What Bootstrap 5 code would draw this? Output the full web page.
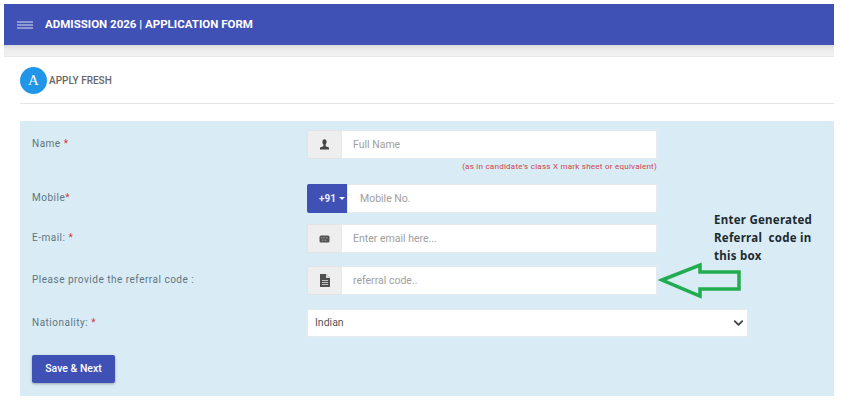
<!DOCTYPE html>
<html lang="en">
  <head>
    <meta charset="UTF-8" />
    <meta name="viewport" content="width=device-width, initial-scale=1.0" />
    <title>Application Form</title>
    <link
      href="https://cdn.jsdelivr.net/npm/bootstrap@5.3.0/dist/css/bootstrap.min.css"
      rel="stylesheet"
    />
    <style>
      body {
        font-family: Roboto, "Liberation Sans", sans-serif;
        background: #fff;
        padding: 4px 7px 0 4px;
        height: 401px;
        overflow: hidden;
      }
      .top-bar {
        height: 41px;
        background: #3f51b5;
        padding: 0 13px;
        color: #fff;
        font-size: 11.5px;
        font-weight: 700;
        gap: 12px;
      }
      .bar-shade {
        height: 12px;
        background: linear-gradient(#d9d9d9, #ececec 40%, #f1f1f1);
        border-bottom: 1px solid #e8e8e8;
      }
      .head-row {
        margin: 0 0 0 16px;
        height: 47px;
        border-bottom: 1px solid #e6e6e6;
        font-size: 10px;
        font-weight: 500;
        color: #666;
        gap: 2px;
      }
      .avatar-a {
        width: 27px;
        height: 27px;
        border-radius: 50%;
        background: #2196e8;
        color: #fff;
        font-family: "Liberation Serif", serif;
        font-size: 15px;
      }
      .form-panel {
        margin: 17px 0 0 16px;
        height: 275px;
        background: #d9ecf6;
        padding: 9px 12px 0;
      }
      .form-line {
        font-size: 10px;
        letter-spacing: 0.5px;
        color: #5f7480;
      }
      .form-line label {
        width: 275px;
        flex: none;
        padding-top: 6px;
      }
      .req {
        color: #d9343f;
      }
      .field-box {
        width: 350px;
        height: 29px;
        flex-wrap: nowrap;
        letter-spacing: 0;
      }
      .field-box .input-group-text {
        width: 35px;
        background: #eeeeee;
        border: 1px solid #e3e3e3;
        border-radius: 0;
        justify-content: center;
        padding: 0;
      }
      .field-box .form-control {
        border: 1px solid #e6eaec;
        border-radius: 0;
        font-size: 10.5px;
        padding: 0 11px;
        height: 29px;
        min-height: 0;
        color: #555;
        box-shadow: none;
      }
      .form-control::placeholder {
        color: #a0a0a0;
        opacity: 1;
      }
      .code-btn {
        width: 41px;
        background: #3f51b5;
        color: #e8ebf8;
        font-size: 10px;
        font-weight: 700;
        border-radius: 2px 0 0 2px;
        padding-left: 9px;
        gap: 3px;
      }
      .caret-down {
        width: 0;
        height: 0;
        border: 3px solid transparent;
        border-top-color: #fff;
        border-bottom: 0;
      }
      .field-box .mobile-input {
        padding-left: 12px;
      }
      .name-note {
        width: 350px;
        font-size: 8px;
        letter-spacing: 0.25px;
        color: #cf4149;
        text-align: right;
        height: 25px;
        padding-top: 2px;
        margin-left: 275px;
      }
      .gap-a {
        margin-top: 11px;
      }
      .gap-b {
        margin-top: 13px;
      }
      .gap-c {
        margin-top: 14px;
      }
      .nation-select {
        width: 441px;
        height: 28px;
        min-height: 0;
        font-size: 10.5px;
        letter-spacing: 0;
        padding: 0 7px;
        border: 1px solid #e6eaec;
        border-radius: 0;
        color: #555;
        background-image: url("data:image/svg+xml,%3csvg xmlns='http://www.w3.org/2000/svg' viewBox='0 0 16 16'%3e%3cpath fill='none' stroke='%23444' stroke-linecap='round' stroke-linejoin='round' stroke-width='3' d='m2 5 6 6 6-6'/%3e%3c/svg%3e");
        background-size: 13px 10px;
        background-position: right 2px center;
      }
      .save-btn {
        margin-top: 18px;
        width: 83px;
        height: 28px;
        padding: 0;
        background: #3f51b5;
        border: 0;
        border-radius: 2px;
        color: #fff;
        font-size: 10.5px;
        font-weight: 500;
        box-shadow: 0 1px 3px rgba(0, 0, 0, 0.3);
      }
      .hint-text {
        position: absolute;
        left: 694px;
        top: 90px;
        font-family: "Noto Sans", sans-serif;
        font-size: 11.5px;
        font-weight: 700;
        letter-spacing: 0.25px;
        line-height: 18px;
        color: #1d2a30;
        white-space: pre;
      }
      .hint-arrow {
        position: absolute;
        left: 638px;
        top: 141px;
      }
    </style>
  </head>

  <body>
    <div class="top-bar d-flex align-items-center">
      <svg width="16" height="8" viewBox="0 0 16 8">
        <path d="M0 1h16M0 4h16M0 7h16" stroke="#dfe3f5" stroke-width="1" />
      </svg>
      <span>ADMISSION 2026 | APPLICATION FORM</span>
    </div>
    <div class="bar-shade"></div>

    <div class="head-row d-flex align-items-center">
      <div class="avatar-a d-flex align-items-center justify-content-center">A</div>
      <span>APPLY FRESH</span>
    </div>

    <div class="form-panel position-relative">
      <div class="form-line d-flex">
        <label>Name <span class="req">*</span></label>
        <div class="input-group field-box">
          <span class="input-group-text">
            <svg width="11" height="11" viewBox="0 0 11 11">
              <path d="M3.400 3c0-1.600.9-2.700 2.100-2.700S7.600 1.400 7.600 3c0 1.100-.5 2-1 2.500v1.700l3.400 1.300V10.500H1V8.500l3.400-1.300V5.500C3.900 5 3.400 4.100 3.400 3z" fill="#444" />
            </svg>
          </span>
          <input type="text" class="form-control" placeholder="Full Name" />
        </div>
      </div>
      <div class="name-note">(as in candidate's class X mark sheet or equivalent)</div>

      <div class="form-line d-flex">
        <label>Mobile<span class="req">*</span></label>
        <div class="input-group field-box">
          <span class="code-btn d-flex align-items-center justify-content-center">+91 <i class="caret-down"></i></span>
          <input type="text" class="form-control mobile-input" placeholder="Mobile No." />
        </div>
      </div>

      <div class="form-line d-flex gap-a">
        <label>E-mail: <span class="req">*</span></label>
        <div class="input-group field-box">
          <span class="input-group-text">
            <svg width="11" height="8" viewBox="0 0 11 8">
              <rect x="0.500" y="0.500" width="10" height="7" rx="1.500" fill="#555" />
              <path d="M2 2.800h7M3 5.200h5" stroke="#aaa" stroke-width="0.900" stroke-dasharray="1 .6" />
            </svg>
          </span>
          <input type="text" class="form-control" placeholder="Enter email here..." />
        </div>
      </div>

      <div class="form-line d-flex gap-b">
        <label>Please provide the referral code :</label>
        <div class="input-group field-box">
          <span class="input-group-text">
            <svg width="10" height="13" viewBox="0 0 10 13">
              <path d="M0 0h6L10 4V13H0z" fill="#505050" />
              <path d="M6 0v4h4z" fill="#ddd" />
              <path d="M2 6.500h6M2 8.500h6M2 10.500h6" stroke="#ddd" stroke-width="0.800" />
            </svg>
          </span>
          <input type="text" class="form-control" placeholder="referral code.." />
        </div>
      </div>

      <div class="form-line d-flex gap-c">
        <label>Nationality: <span class="req">*</span></label>
        <select class="form-select nation-select">
          <option>Indian</option>
        </select>
      </div>

      <button type="button" class="btn save-btn">Save &amp; Next</button>

      <div class="hint-text">Enter Generated
Referral  code in
this box</div>
      <svg class="hint-arrow" width="84" height="38" viewBox="0 0 84 38">
        <path d="M4 18 L42 3 V10 H81 V27 H42 V34 Z" fill="none" stroke="#22ac4f" stroke-width="3.500" />
      </svg>
    </div>

    <script src="https://cdn.jsdelivr.net/npm/bootstrap@5.3.0/dist/js/bootstrap.bundle.min.js"></script>
  </body>
</html>
